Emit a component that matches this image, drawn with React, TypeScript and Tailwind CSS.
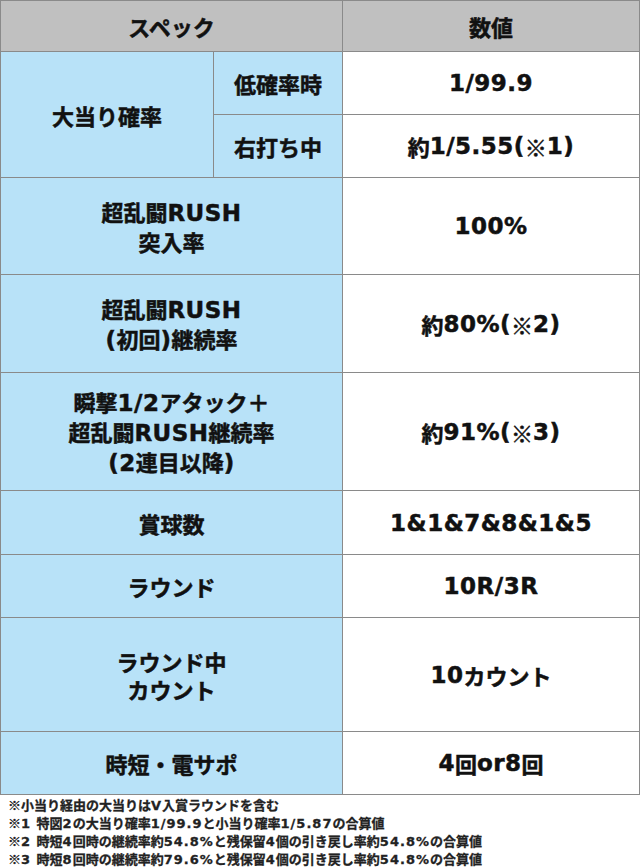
import React from 'react';
import clsx from 'clsx';

// ASCII runs are set in a wider latin face, the rest in the CJK face
const Txt: React.FC<{ s: string; latin?: string }> = ({ s, latin = 'text-[23px] tracking-[0.5px]' }) => (
  <>
    {s.split(/([ -~]+)/).map((part, i) =>
      /^[ -~]+$/.test(part) ? (
        <span key={i} className={clsx("font-['DejaVu_Sans',sans-serif]", latin)}>
          {part}
        </span>
      ) : (
        <span key={i}>{part}</span>
      )
    )}
  </>
);

const Lines: React.FC<{ lines: string[] }> = ({ lines }) => (
  <div>
    {lines.map((line) => (
      <div key={line}>
        <Txt s={line} />
      </div>
    ))}
  </div>
);

type CellProps = { className?: string; children: React.ReactNode };

const Cell: React.FC<CellProps> = ({ className, children }) => (
  <div
    className={clsx(
      'flex items-center justify-center border-r border-b border-[#8a8a8a] text-center',
      className
    )}
  >
    {children}
  </div>
);

const ROWS: { label: string[]; value: string }[] = [
  { label: ['超乱闘RUSH', '突入率'], value: '100%' },
  { label: ['超乱闘RUSH', '(初回)継続率'], value: '約80%(※2)' },
  { label: ['瞬撃1/2アタック＋', '超乱闘RUSH継続率', '(2連目以降)'], value: '約91%(※3)' },
  { label: ['賞球数'], value: '1&1&7&8&1&5' },
  { label: ['ラウンド'], value: '10R/3R' },
  { label: ['ラウンド中', 'カウント'], value: '10カウント' },
  { label: ['時短・電サポ'], value: '4回or8回' },
];

const NOTES = [
  '※小当り経由の大当りはV入賞ラウンドを含む',
  '※1 特図2の大当り確率1/99.9と小当り確率1/5.87の合算値',
  '※2 時短4回時の継続率約54.8%と残保留4個の引き戻し率約54.8%の合算値',
  '※3 時短8回時の継続率約79.6%と残保留4個の引き戻し率約54.8%の合算値',
];

const App: React.FC = () => {
  return (
    <div className="h-[867px] w-[640px] bg-white font-['Noto_Sans_CJK_JP',sans-serif] font-bold text-[#111]">
      <div className="grid grid-cols-[213px_129px_297px] grid-rows-[51px_63px_63px_97px_98px_118px_64px_63px_114px_63px] border-t border-l border-[#8a8a8a] text-[22px] leading-[28px] [-webkit-text-stroke:0.5px_#111]">
        <Cell className="col-span-2 bg-[#c0c0c0]">スペック</Cell>
        <Cell className="bg-[#c0c0c0]">数値</Cell>

        <Cell className="row-span-2 bg-[#b8e2f8]">大当り確率</Cell>
        <Cell className="bg-[#b8e2f8]">低確率時</Cell>
        <Cell>
          <Txt s="1/99.9" />
        </Cell>
        <Cell className="bg-[#b8e2f8]">右打ち中</Cell>
        <Cell>
          <Txt s="約1/5.55(※1)" />
        </Cell>

        {ROWS.map((row) => (
          <React.Fragment key={row.value}>
            <Cell className="col-span-2 bg-[#b8e2f8]">
              <Lines lines={row.label} />
            </Cell>
            <Cell>
              <Txt s={row.value} />
            </Cell>
          </React.Fragment>
        ))}
      </div>

      <div className="px-2 pt-[1px] text-[13px] leading-[17px] text-[#222] [-webkit-text-stroke:0.3px_#222]">
        {NOTES.map((note) => (
          <p key={note}>
            <Txt s={note} latin="text-[13px] tracking-[1px]" />
          </p>
        ))}
      </div>
    </div>
  );
};

export default App;
